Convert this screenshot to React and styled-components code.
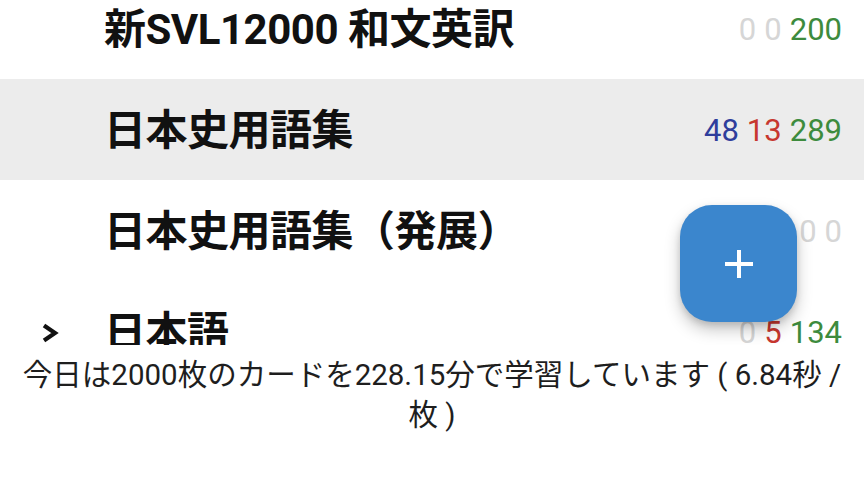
import React from "react";
import styled, { createGlobalStyle } from "styled-components";

const Global = createGlobalStyle`
  html, body { margin: 0; padding: 0; background: #ffffff; }
  body { width: 864px; height: 486px; overflow: hidden; font-family: "Roboto", "Noto Sans CJK JP", sans-serif; }
`;

const Screen = styled.div`
  width: 864px;
  height: 486px;
  display: flex;
  flex-direction: column;
  background: #fff;
`;

const ListViewport = styled.div`
  position: relative;
  height: 345px;
  overflow: hidden;
  flex: none;
`;

const ListScroll = styled.div`
  margin-top: -22px;
  display: flex;
  flex-direction: column;
`;

const Row = styled.div`
  height: 101px;
  display: grid;
  grid-template-columns: 104px 1fr auto;
  align-items: center;
  padding-right: 22px;
  padding-bottom: 6px;
  box-sizing: border-box;
  background: ${(p) => (p.$active ? "#ececec" : "#ffffff")};
`;

const Toggle = styled.div`
  display: flex;
  justify-content: flex-start;
  padding-left: 41px;
  padding-top: 8px;
  align-items: center;
`;

const Title = styled.div`
  font-family: "Roboto", "Noto Sans CJK JP", sans-serif;
  font-weight: 700;
  font-size: 42px;
  color: #111;
  white-space: nowrap;
  letter-spacing: -0.5px;
`;

const Counts = styled.div`
  display: flex;
  gap: 8px;
  padding-top: 8px;
  font-family: "Roboto", sans-serif;
  font-size: 31px;
  line-height: 1;
`;

const Count = styled.span`
  color: ${(p) => p.$c};
`;

const Fab = styled.button`
  position: absolute;
  right: 67px;
  top: 205px;
  width: 117px;
  height: 117px;
  border: none;
  border-radius: 32px;
  background: #3b86cd;
  box-shadow: 0 8px 16px rgba(0, 0, 0, 0.22), 0 3px 6px rgba(0, 0, 0, 0.12);
  display: flex;
  align-items: center;
  justify-content: center;
  padding: 0;
`;

const Footer = styled.div`
  padding: 10px 10px 0;
  text-align: center;
  font-family: "Roboto", "Noto Sans CJK JP", sans-serif;
  font-size: 29.5px;
  line-height: 40px;
  color: #1e1e1e;
`;

const COLORS = { grey: "#d6d6d6", blue: "#2f3e9c", red: "#c7372f", green: "#3d8b3d" };

const decks = [
  { name: "新SVL12000 和文英訳", counts: [["0", "grey"], ["0", "grey"], ["200", "green"]] },
  { name: "日本史用語集", counts: [["48", "blue"], ["13", "red"], ["289", "green"]], active: true },
  { name: "日本史用語集（発展）", counts: [["0", "grey"], ["0", "grey"], ["0", "grey"]] },
  { name: "日本語", counts: [["0", "grey"], ["5", "red"], ["134", "green"]], collapsed: true },
];

function Chevron() {
  return (
    <svg width="18" height="20" viewBox="0 0 18 20">
      <path d="M3 2.5 L14 10 L3 17.5" fill="none" stroke="#111" strokeWidth="4.2" strokeLinejoin="miter" />
    </svg>
  );
}

export default function App() {
  return (
    <Screen>
      <Global />
      <ListViewport>
        <ListScroll>
          {decks.map((d) => (
            <Row key={d.name} $active={d.active}>
              <Toggle>{d.collapsed ? <Chevron /> : null}</Toggle>
              <Title>{d.name}</Title>
              <Counts>
                {d.counts.map(([v, c], i) => (
                  <Count key={i} $c={COLORS[c]}>{v}</Count>
                ))}
              </Counts>
            </Row>
          ))}
        </ListScroll>
        <Fab aria-label="add">
          <svg width="32" height="32" viewBox="0 0 32 32">
            <path d="M16 2 V30 M2 16 H30" stroke="#fff" strokeWidth="4" />
          </svg>
        </Fab>
      </ListViewport>
      <Footer>今日は2000枚のカードを228.15分で学習しています ( 6.84秒 / 枚 )</Footer>
    </Screen>
  );
}
